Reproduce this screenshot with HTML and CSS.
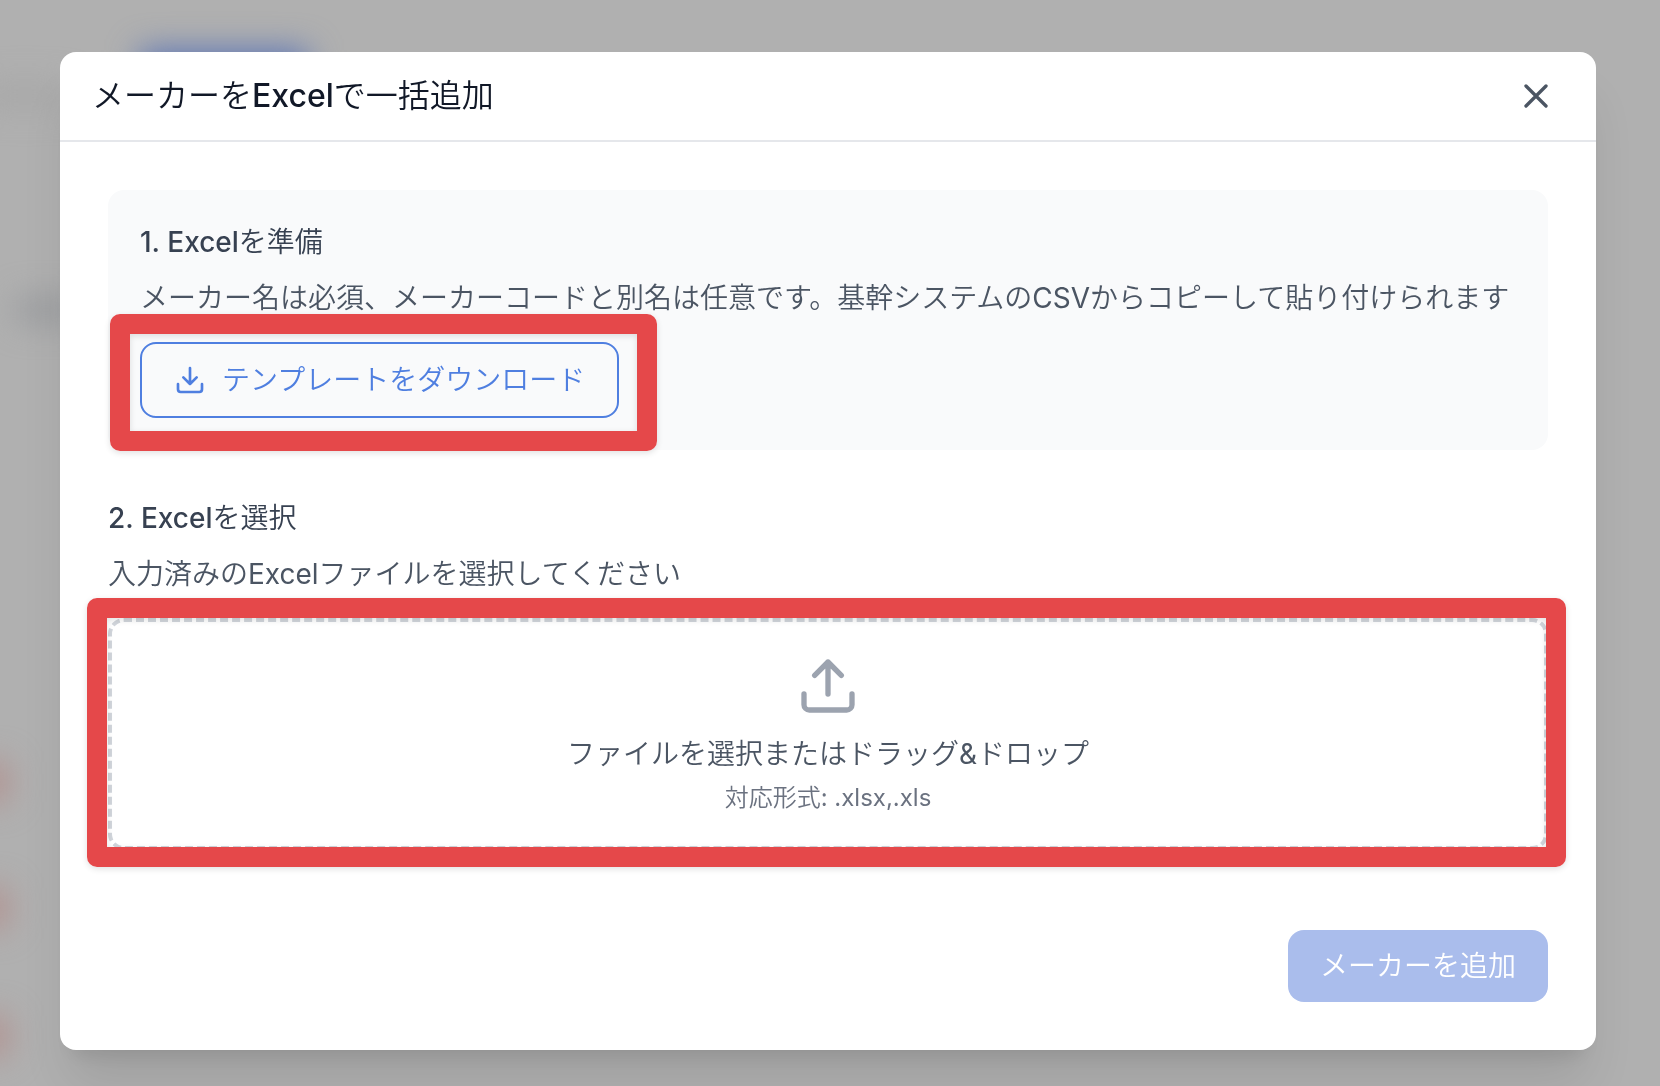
FILE: index.html
```html
<!DOCTYPE html>
<html lang="ja">
<head>
<meta charset="UTF-8">
<meta name="viewport" content="width=device-width, initial-scale=1.0">
<title>メーカーをExcelで一括追加</title>
<link rel="stylesheet" href="styles.css">
</head>
<body>

<div class="backdrop" aria-hidden="true">
    <span class="blob blob-blue"></span>
    <span class="blob blob-text blob-text-top"></span>
    <span class="blob blob-text"></span>
    <span class="blob blob-red"></span>
    <span class="blob blob-red blob-red-2"></span>
    <span class="blob blob-red blob-red-3"></span>
</div>

<div class="modal" role="dialog" aria-modal="true" aria-labelledby="modal-title">
    <header class="modal-header">
        <h1 id="modal-title">メーカーをExcelで一括追加</h1>
        <button type="button" class="close" aria-label="閉じる">
            <svg class="icon" viewBox="0 0 24 24"><path d="M18 6 6 18M6 6l12 12"/></svg>
        </button>
    </header>

    <div class="modal-body">
        <section class="step step-card">
            <h2>1. Excelを準備</h2>
            <p>メーカー名は必須、メーカーコードと別名は任意です。基幹システムのCSVからコピーして貼り付けられます</p>
            <div class="marked marked-download">
                <button type="button" class="btn btn-outline">
                    <svg class="icon" viewBox="0 0 24 24"><path d="M21 15v4a2 2 0 0 1-2 2H5a2 2 0 0 1-2-2v-4M7 10l5 5 5-5M12 15V3"/></svg>
                    テンプレートをダウンロード
                </button>
            </div>
        </section>

        <section class="step">
            <h2>2. Excelを選択</h2>
            <p>入力済みのExcelファイルを選択してください</p>
            <div class="marked marked-upload">
                <label class="dropzone" for="file">
                    <svg class="icon" viewBox="0 0 24 24"><path d="M21 15v4a2 2 0 0 1-2 2H5a2 2 0 0 1-2-2v-4M17 8l-5-5-5 5M12 3v12"/></svg>
                    <span class="dropzone-text">ファイルを選択またはドラッグ&amp;ドロップ</span>
                    <span class="dropzone-hint">対応形式: .xlsx,.xls</span>
                </label>
                <input type="file" id="file" class="file-input" accept=".xlsx,.xls">
            </div>
        </section>

        <footer class="modal-footer">
            <button type="submit" class="btn btn-primary" disabled>メーカーを追加</button>
        </footer>
    </div>
</div>

</body>
</html>
```
FILE: styles.css
```css
* {
    margin: 0;
    padding: 0;
    box-sizing: border-box;
}

body {
    font-family: Inter, "Noto Sans CJK JP DemiLight", "Noto Sans CJK JP Light", "Noto Sans CJK JP", sans-serif;
    font-size: 28px;
    line-height: 40px;
    color: #4b5563;
    background: #b0b0b0;
    overflow: hidden;
}

button {
    font: inherit;
    cursor: pointer;
}

.icon {
    display: block;
    fill: none;
    stroke: currentColor;
    stroke-width: 2;
    stroke-linecap: round;
    stroke-linejoin: round;
}

/* dimmed page behind the dialog */
.backdrop {
    position: fixed;
    inset: 0;
    overflow: hidden;
}

.blob {
    position: absolute;
    filter: blur(16px);
}

.blob-blue {
    left: 140px;
    top: 50px;
    width: 168px;
    height: 60px;
    background: #5b74b5;
}

.blob-text {
    left: 16px;
    top: 298px;
    width: 60px;
    height: 24px;
    background: #97999c;
}

.blob-text-top {
    left: -20px;
    top: 84px;
    width: 90px;
    background: #a7a7a7;
}

.blob-red {
    left: -26px;
    top: 762px;
    width: 34px;
    height: 40px;
    background: #b2908e;
}

.blob-red-2 {
    top: 888px;
}

.blob-red-3 {
    top: 1016px;
}

.modal {
    position: relative;
    margin: 52px 64px 36px 60px;
    background: #fff;
    border-radius: 16px;
    box-shadow: 0 40px 50px -10px rgba(0, 0, 0, 0.1), 0 16px 20px -12px rgba(0, 0, 0, 0.1);
}

.modal-header {
    display: flex;
    align-items: center;
    justify-content: space-between;
    padding: 16px 32px;
    border-bottom: 2px solid #e5e7eb;
}

.modal-header h1 {
    font-size: 32px;
    font-weight: 500;
    color: #111827;
}

.close {
    padding: 8px;
    border: 0;
    background: none;
    color: #4b5563;
}

.close .icon {
    width: 40px;
    height: 40px;
}

.modal-body {
    display: flex;
    flex-direction: column;
    gap: 48px;
    padding: 48px;
}

.step h2 {
    margin-bottom: 16px;
    font-size: 28px;
    font-weight: 500;
    color: #374151;
}

.step p {
    margin-bottom: 24px;
}

.step-card {
    padding: 32px;
    background: #f9fafb;
    border-radius: 16px;
}

.btn {
    display: flex;
    align-items: center;
    gap: 16px;
    padding: 16px 32px;
    border: 0;
    border-radius: 16px;
}

.btn-outline {
    border: 2px solid #4f7fe0;
    background: none;
    color: #4f7fe0;
}

.btn-outline .icon {
    width: 32px;
    height: 32px;
}

.btn-primary {
    background: #aabdec;
    color: #fff;
}

.dropzone {
    display: flex;
    flex-direction: column;
    align-items: center;
    padding: 32px;
    border: 4px dashed #d1d5db;
    border-radius: 16px;
    cursor: pointer;
}

.dropzone .icon {
    width: 64px;
    height: 64px;
    margin-bottom: 16px;
    color: #9ca3af;
}

.dropzone-text {
    margin-bottom: 8px;
}

.dropzone-hint {
    font-size: 24px;
    line-height: 32px;
    color: #6b7280;
}

.file-input {
    position: absolute;
    width: 1px;
    height: 1px;
    opacity: 0;
}

/* red frames around the two controls */
.marked {
    position: relative;
    width: fit-content;
}

.marked::after {
    content: "";
    position: absolute;
    border: 20px solid #e5484a;
    border-radius: 10px;
    box-shadow: 0 2px 6px rgba(0, 0, 0, 0.12), inset 0 2px 6px rgba(0, 0, 0, 0.12);
    pointer-events: none;
}

.marked-download::after {
    inset: -28px -38px -33px -30px;
}

.marked-upload {
    width: auto;
}

.marked-upload::after {
    inset: -20px -18px -17px -21px;
}

.modal-footer {
    display: flex;
    justify-content: flex-end;
    padding-top: 32px;
}
```
